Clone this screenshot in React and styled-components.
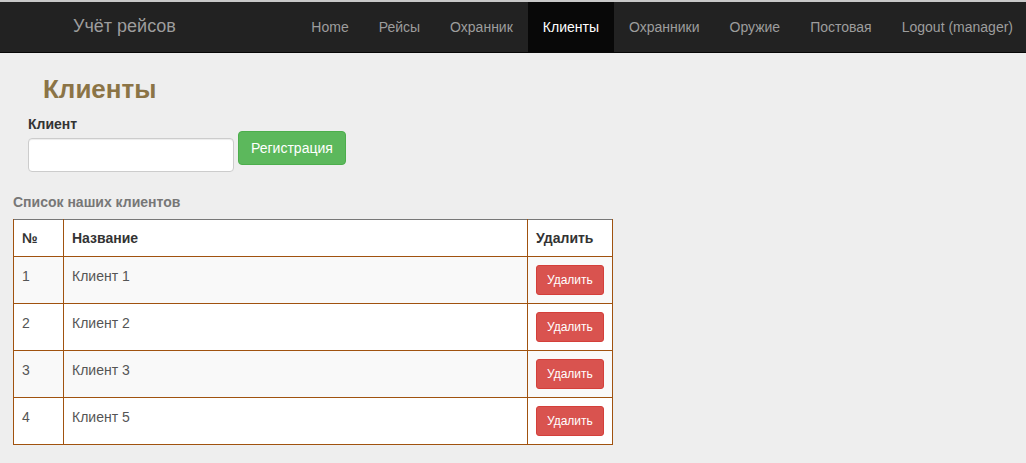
import React from "react";
import styled, { createGlobalStyle } from "styled-components";

const GlobalStyle = createGlobalStyle`
  html, body {
    margin: 0;
    padding: 0;
    background: #eeeeee;
    font-family: "Liberation Sans", Arial, sans-serif;
    font-size: 14px;
    color: #333;
  }
  * { box-sizing: border-box; }
`;

const Page = styled.div`
  border-top: 2px solid #c8c8c8;
  min-height: 461px;
`;

const Navbar = styled.nav`
  height: 51px;
  background: #222222;
  border-bottom: 1px solid #080808;
  display: flex;
  align-items: stretch;
  padding-left: 73px;
`;

const Brand = styled.a`
  font-size: 18px;
  color: #9d9d9d;
  display: flex;
  align-items: center;
  padding-bottom: 2px;
  text-decoration: none;
`;

const NavList = styled.ul`
  list-style: none;
  margin: 0 -2px 0 auto;
  padding: 0;
  display: flex;
`;

const NavItem = styled.li`
  display: flex;
  align-items: center;
  padding: 0 15px 1px;
  font-size: 14px;
  color: ${p => (p.active ? "#ffffff" : "#9d9d9d")};
  background: ${p => (p.active ? "#080808" : "transparent")};
`;

const Content = styled.main`
  padding: 0 13px;
`;

const Title = styled.h2`
  margin: 21px 0 0 30px;
  font-size: 26px;
  font-weight: bold;
  color: #8b7446;
  line-height: 30px;
`;

const FormRow = styled.div`
  display: flex;
  align-items: flex-end;
  gap: 4px;
  margin: 12px 0 0 15px;
`;

const FormGroup = styled.div`
  display: flex;
  flex-direction: column;
`;

const Label = styled.label`
  font-weight: bold;
  font-size: 14px;
  margin-bottom: 6px;
`;

const Input = styled.input`
  width: 206px;
  height: 34px;
  border: 1px solid #ccc;
  border-radius: 4px;
  background: #fff;
  box-shadow: inset 0 1px 1px rgba(0, 0, 0, 0.075);
`;

const Button = styled.button`
  font-family: "Liberation Sans", Arial, sans-serif;
  color: #fff;
  border: 1px solid ${p => p.border};
  background: ${p => p.bg};
  border-radius: ${p => (p.small ? "3px" : "4px")};
  font-size: ${p => (p.small ? "12px" : "14px")};
  height: ${p => (p.small ? "30px" : "34px")};
  padding: ${p => (p.small ? "0 10px" : "0 12px")};
  cursor: pointer;
`;

const SubTitle = styled.h4`
  margin: 21px 0 8px;
  font-size: 14px;
  line-height: 18px;
  font-weight: bold;
  color: #777;
`;

const Table = styled.table`
  width: 600px;
  border-collapse: collapse;
  background: #fff;
  border-top: 1px solid #777;
`;

const Th = styled.th`
  border: 1px solid #a0520f;
  border-top: none;
  text-align: left;
  padding: 8px;
  height: 37px;
  font-weight: bold;
  color: #333;
  width: ${p => p.w || "auto"};
`;

const Row = styled.tr`
  background: ${p => (p.odd ? "#f9f9f9" : "#ffffff")};
`;

const Td = styled.td`
  border: 1px solid #a0520f;
  padding: ${p => (p.text ? "11px 8px 8px" : "8px")};
  height: 47px;
  vertical-align: top;
  color: #555;
`;

const clients = [
  { n: 1, name: "Клиент 1" },
  { n: 2, name: "Клиент 2" },
  { n: 3, name: "Клиент 3" },
  { n: 4, name: "Клиент 5" },
];

const navItems = ["Home", "Рейсы", "Охранник", "Клиенты", "Охранники", "Оружие", "Постовая", "Logout (manager)"];

export default function App() {
  return (
    <Page>
      <GlobalStyle />
      <Navbar>
        <Brand>Учёт рейсов</Brand>
        <NavList>
          {navItems.map(item => (
            <NavItem key={item} active={item === "Клиенты"}>
              {item}
            </NavItem>
          ))}
        </NavList>
      </Navbar>

      <Content>
        <Title>Клиенты</Title>
        <FormRow>
          <FormGroup>
            <Label>Клиент</Label>
            <Input />
          </FormGroup>
          <Button bg="#5cb85c" border="#4cae4c" style={{ marginBottom: 7 }}>
            Регистрация
          </Button>
        </FormRow>

        <SubTitle>Список наших клиентов</SubTitle>
        <Table>
          <thead>
            <tr>
              <Th w="50px">№</Th>
              <Th>Название</Th>
              <Th w="85px">Удалить</Th>
            </tr>
          </thead>
          <tbody>
            {clients.map((c, i) => (
              <Row key={c.n} odd={i % 2 === 0}>
                <Td text>{c.n}</Td>
                <Td text>{c.name}</Td>
                <Td>
                  <Button small bg="#d9534f" border="#d43f3a">
                    Удалить
                  </Button>
                </Td>
              </Row>
            ))}
          </tbody>
        </Table>
      </Content>
    </Page>
  );
}
